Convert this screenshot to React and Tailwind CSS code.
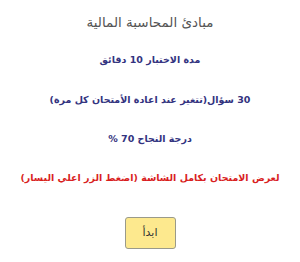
import React from "react";

export default function App() {
    return (
        <div dir="rtl" className="w-[300px] h-[262px] bg-white flex flex-col items-center whitespace-nowrap font-['DejaVu_Sans',sans-serif]">
            <h1 className="mt-[13px] h-[18px] leading-[18px] text-[13.5px] text-[#555555]">مبادئ المحاسبة المالية</h1>

            <p className="mt-[21px] h-[16px] leading-[16px] text-[9.5px] font-bold text-[#333380]">
                مدة الاختبار 10 دقائق
            </p>
            <p className="mt-[24px] h-[16px] leading-[16px] text-[9.5px] font-bold text-[#333380]">
                30 سؤال(تتغير عند اعادة الأمتحان كل مرة)
            </p>
            <p className="mt-[23px] h-[16px] leading-[16px] text-[9.5px] font-bold text-[#333380]">
                درجة النجاح 70 %
            </p>
            <p className="mt-[23px] h-[16px] leading-[16px] text-[9.5px] font-bold text-[#d91f1f]">
                لعرض الامتحان بكامل الشاشة (اضغط الزر اعلي اليسار)
            </p>

            <button className="mt-[31px] w-[51px] h-[32px] bg-[#fde98e] border border-[#9a9a8a] rounded-[3px] text-[11px] text-[#333333]">
                ابدأ
            </button>
        </div>
    );
}
